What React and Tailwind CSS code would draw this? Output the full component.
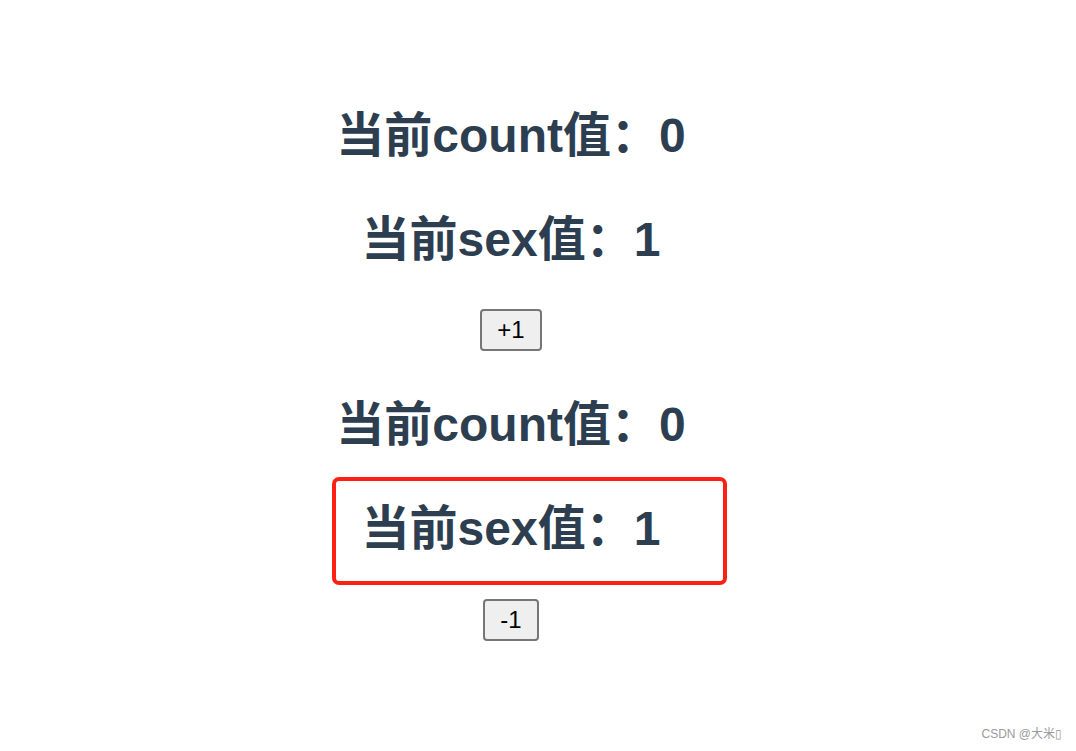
const font = { fontFamily: '"Liberation Sans", "Noto Sans CJK SC", sans-serif' };

function Title({ children }) {
  return <h1 className="text-[48px] font-bold leading-[104px] h-[104px] text-[#2c3e50]">{children}</h1>;
}

function Btn({ children }) {
  return (
    <button className="px-[15px] py-[5px] text-[24px] leading-[28px] text-black bg-[#efefef] border-2 border-[#767676] rounded-[4px]">
      {children}
    </button>
  );
}

export default function App() {
  const count = 0;
  const sex = 1;
  return (
    <div className="relative w-[1076px] h-[751px] bg-white overflow-hidden" style={font}>
      <div className="w-[1022px] pt-[84px] flex flex-col items-center text-center">
        <Title>当前count值：{count}</Title>
        <Title>当前sex值：{sex}</Title>
        <div className="mt-[17px]">
          <Btn>+1</Btn>
        </div>
        <div className="mt-[22px]">
          <Title>当前count值：{count}</Title>
          <Title>当前sex值：{sex}</Title>
        </div>
        <div className="mt-[18px]">
          <Btn>-1</Btn>
        </div>
      </div>
      <div className="absolute left-[332px] top-[477px] w-[395px] h-[108px] border-[4px] border-[#ff2015] rounded-[7px]" />
      <div className="absolute right-[14px] bottom-[8px] text-[12px] text-[#9a9a9a]">CSDN @大米▯</div>
    </div>
  );
}
